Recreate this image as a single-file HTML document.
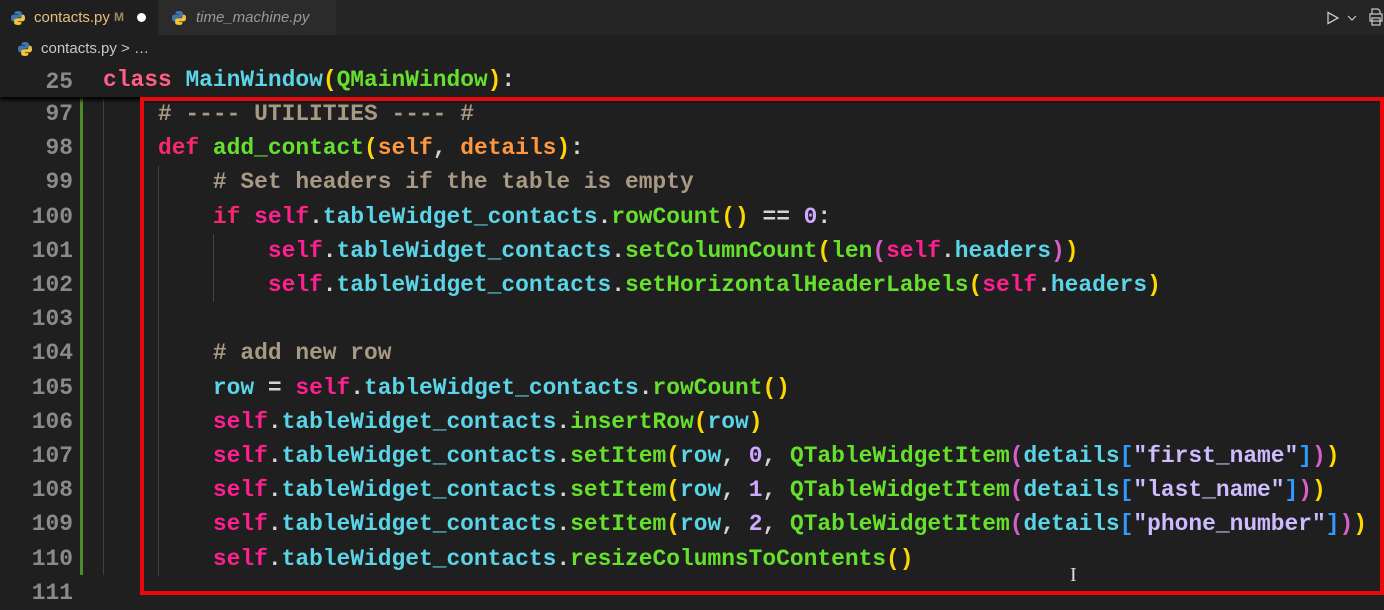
<!DOCTYPE html>
<html><head><style>
*{margin:0;padding:0;box-sizing:border-box}
body{width:1384px;height:609px;background:#1f1f1f;overflow:hidden;position:relative;font-family:"Liberation Mono",monospace;}
.tabs{position:absolute;left:0;top:0;width:1384px;height:35px;background:#252525;}
.tab{position:absolute;top:0;height:35px;font-family:"Liberation Sans",sans-serif;font-size:15px;line-height:35px;}
.crumb{position:absolute;top:35px;left:0;width:1384px;height:28px;background:#1f1f1f;font-family:"Liberation Sans",sans-serif;font-size:15px;color:#c8c8c8;line-height:28px;}
.ln{position:absolute;left:0;width:73px;text-align:right;color:#8a8a8a;font-size:22.9px;font-weight:bold}
.code{position:absolute;left:103px;white-space:pre;font-size:22.9px;font-weight:bold;color:#d4d4d4;}
.k{color:#f92672}.p{color:#ff5f87}.f{color:#66e02d}.c{color:#a89984;font-weight:bold}.v{color:#5ad4e6}.o{color:#ff9640}
.s{color:#ff1f8f}.y{color:#ffd700}.m{color:#d65fcb}.b{color:#2f9bff}.str{color:#cdbcff}.n{color:#d0a8ff}
.guide{position:absolute;width:1px;background:#404040;}
</style></head><body>
<div class="tabs">
 <div class="tab" style="left:0;width:158px;background:#1f1f1f;padding-left:10px;">
  <svg width="16" height="16" viewBox="0 0 16 16" style="position:absolute;left:10px;top:10px"><path d="M7.9 1C4.5 1 4.7 2.5 4.7 2.5V4h3.3v.6H3.4S1 4.4 1 8c0 3.6 2.1 3.4 2.1 3.4h1.2V9.8s0-2.1 2.1-2.1h3.4s2 0 2-1.9V2.9S12 1 7.9 1z" fill="#3a78b4"/><path d="M8.1 15c3.4 0 3.2-1.5 3.2-1.5V12H8v-.6h4.6S15 11.6 15 8c0-3.6-2.1-3.4-2.1-3.4h-1.2v1.6s0 2.1-2.1 2.1H6.2s-2 0-2 1.9v3.1S4 15 8.1 15z" fill="#f5c33b"/></svg>
  <span style="position:absolute;left:34px;color:#e5c07b">contacts.py</span>
  <span style="position:absolute;left:114px;color:#a08a60;font-size:12px;font-weight:bold">M</span>
  <span style="position:absolute;left:137px;top:13px;width:9px;height:9px;border-radius:50%;background:#fff"></span>
 </div>
 <div class="tab" style="left:159px;width:177px;background:#2b2b2b;">
  <svg width="16" height="16" viewBox="0 0 16 16" style="position:absolute;left:12px;top:10px"><path d="M7.9 1C4.5 1 4.7 2.5 4.7 2.5V4h3.3v.6H3.4S1 4.4 1 8c0 3.6 2.1 3.4 2.1 3.4h1.2V9.8s0-2.1 2.1-2.1h3.4s2 0 2-1.9V2.9S12 1 7.9 1z" fill="#3a78b4"/><path d="M8.1 15c3.4 0 3.2-1.5 3.2-1.5V12H8v-.6h4.6S15 11.6 15 8c0-3.6-2.1-3.4-2.1-3.4h-1.2v1.6s0 2.1-2.1 2.1H6.2s-2 0-2 1.9v3.1S4 15 8.1 15z" fill="#f5c33b"/></svg>
  <span style="position:absolute;left:37px;color:#9a9a9a;font-style:italic">time_machine.py</span>
 </div>
 <svg width="14" height="14" viewBox="0 0 14 14" style="position:absolute;left:1326px;top:11px"><path d="M2 1.5L12 7 2 12.5z" fill="none" stroke="#c8c8c8" stroke-width="1.3"/></svg>
 <svg width="10" height="10" viewBox="0 0 10 10" style="position:absolute;left:1347px;top:13px"><path d="M1 3l4 4 4-4" fill="none" stroke="#c8c8c8" stroke-width="1.2"/></svg>
 <svg width="16" height="18" viewBox="0 0 16 18" style="position:absolute;left:1368px;top:8px"><path d="M4 6V1h6l2 2v3M2 6h12v7H2zM4 10h8v7H4z" fill="none" stroke="#c8c8c8" stroke-width="1.2"/></svg>
</div>
<div class="crumb">
 <svg width="16" height="16" viewBox="0 0 16 16" style="position:absolute;left:17px;top:6px"><path d="M7.9 1C4.5 1 4.7 2.5 4.7 2.5V4h3.3v.6H3.4S1 4.4 1 8c0 3.6 2.1 3.4 2.1 3.4h1.2V9.8s0-2.1 2.1-2.1h3.4s2 0 2-1.9V2.9S12 1 7.9 1z" fill="#3a78b4"/><path d="M8.1 15c3.4 0 3.2-1.5 3.2-1.5V12H8v-.6h4.6S15 11.6 15 8c0-3.6-2.1-3.4-2.1-3.4h-1.2v1.6s0 2.1-2.1 2.1H6.2s-2 0-2 1.9v3.1S4 15 8.1 15z" fill="#f5c33b"/></svg>
 <span style="position:absolute;left:41px">contacts.py &gt; …</span>
</div>
<div style="position:absolute;left:0;top:63px;width:1384px;height:34px;background:#1f1f1f;box-shadow:0 3px 4px #000;z-index:2">
 <div class="ln" style="top:2px;line-height:34px">25</div>
 <div class="code" style="top:0;line-height:34px"><span class="p">class</span> <span class="v">MainWindow</span><span class="y">(</span><span class="f">QMainWindow</span><span class="y">)</span>:</div>
</div>
<div style="position:absolute;left:80px;top:97px;width:3px;height:478px;background:#4f8a2e"></div>
<div class="guide" style="left:103px;top:97px;height:478px"></div>
<div class="guide" style="left:158px;top:166px;height:410px"></div>
<div class="guide" style="left:213px;top:234px;height:68px"></div>
<div style="position:absolute;left:0;top:97px;width:1384px;line-height:34.2px">
<div class="ln" style="position:relative;float:none">97<br>98<br>99<br>100<br>101<br>102<br>103<br>104<br>105<br>106<br>107<br>108<br>109<br>110<br>111</div>
<div class="code" style="top:0">    <span class="c"># ---- UTILITIES ---- #</span>
    <span class="k">def</span> <span class="f">add_contact</span><span class="y">(</span><span class="o">self</span>, <span class="o">details</span><span class="y">)</span>:
        <span class="c"># Set headers if the table is empty</span>
        <span class="k">if</span> <span class="s">self</span>.<span class="v">tableWidget_contacts</span>.<span class="f">rowCount</span><span class="y">()</span> == <span class="n">0</span>:
            <span class="s">self</span>.<span class="v">tableWidget_contacts</span>.<span class="f">setColumnCount</span><span class="y">(</span><span class="f">len</span><span class="m">(</span><span class="s">self</span>.<span class="v">headers</span><span class="m">)</span><span class="y">)</span>
            <span class="s">self</span>.<span class="v">tableWidget_contacts</span>.<span class="f">setHorizontalHeaderLabels</span><span class="y">(</span><span class="s">self</span>.<span class="v">headers</span><span class="y">)</span>

        <span class="c"># add new row</span>
        <span class="v">row</span> = <span class="s">self</span>.<span class="v">tableWidget_contacts</span>.<span class="f">rowCount</span><span class="y">()</span>
        <span class="s">self</span>.<span class="v">tableWidget_contacts</span>.<span class="f">insertRow</span><span class="y">(</span><span class="v">row</span><span class="y">)</span>
        <span class="s">self</span>.<span class="v">tableWidget_contacts</span>.<span class="f">setItem</span><span class="y">(</span><span class="v">row</span>, <span class="n">0</span>, <span class="f">QTableWidgetItem</span><span class="m">(</span><span class="v">details</span><span class="b">[</span><span class="str">"first_name"</span><span class="b">]</span><span class="m">)</span><span class="y">)</span>
        <span class="s">self</span>.<span class="v">tableWidget_contacts</span>.<span class="f">setItem</span><span class="y">(</span><span class="v">row</span>, <span class="n">1</span>, <span class="f">QTableWidgetItem</span><span class="m">(</span><span class="v">details</span><span class="b">[</span><span class="str">"last_name"</span><span class="b">]</span><span class="m">)</span><span class="y">)</span>
        <span class="s">self</span>.<span class="v">tableWidget_contacts</span>.<span class="f">setItem</span><span class="y">(</span><span class="v">row</span>, <span class="n">2</span>, <span class="f">QTableWidgetItem</span><span class="m">(</span><span class="v">details</span><span class="b">[</span><span class="str">"phone_number"</span><span class="b">]</span><span class="m">)</span><span class="y">)</span>
        <span class="s">self</span>.<span class="v">tableWidget_contacts</span>.<span class="f">resizeColumnsToContents</span><span class="y">()</span>
</div>
</div>
<div style="position:absolute;left:140px;top:97px;width:1244px;height:498px;border:4px solid #e80a0a;z-index:3"></div>
<div style="position:absolute;left:1070px;top:565px;color:#ddd;font-size:20px;line-height:20px;font-family:'Liberation Serif',serif">I</div>
</body></html>
